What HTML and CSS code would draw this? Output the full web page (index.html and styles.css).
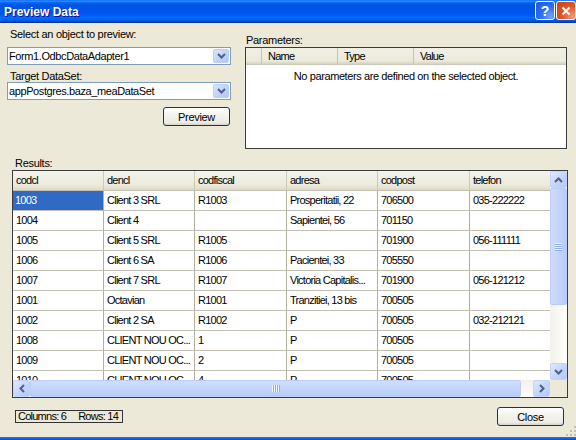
FILE: index.html
```html
<!DOCTYPE html>
<html lang="en">
<head>
    <meta charset="UTF-8">
    <title>Preview Data</title>
    <link rel="stylesheet" href="styles.css">
</head>
<body>
    <div class="window">
        <div class="titlebar">
            <span class="title">Preview Data</span>
            <div class="captionBtns">
                <span class="cbtn help">?</span>
                <span class="cbtn close">
                    <svg width="10" height="10" viewBox="0 0 10 10"><path d="M1.5 1.5 L8.5 8.5 M8.5 1.5 L1.5 8.5" stroke="#fff" stroke-width="2" fill="none"/></svg>
                </span>
            </div>
        </div>

        <div class="content">
            <div class="top">
                <div class="selectCol">
                    <div class="lbl">Select an object to preview:</div>
                    <div class="combo first">
                        <span class="comboText">Form1.OdbcDataAdapter1</span>
                        <span class="comboBtn"><svg width="9" height="6" viewBox="0 0 9 6"><path d="M1 1 L4.5 4.5 L8 1" fill="none" stroke="#4D6185" stroke-width="2"/></svg></span>
                    </div>
                    <div class="lbl second">Target DataSet:</div>
                    <div class="combo">
                        <span class="comboText">appPostgres.baza_meaDataSet</span>
                        <span class="comboBtn"><svg width="9" height="6" viewBox="0 0 9 6"><path d="M1 1 L4.5 4.5 L8 1" fill="none" stroke="#4D6185" stroke-width="2"/></svg></span>
                    </div>
                    <button class="xpBtn previewBtn">Preview</button>
                </div>

                <div class="params">
                    <div class="lbl paramsLbl">Parameters:</div>
                    <div class="listview">
                        <div class="lvHead">
                            <span class="lvCol c0"></span>
                            <span class="lvCol c1">Name</span>
                            <span class="lvCol c2">Type</span>
                            <span class="lvCol c3">Value</span>
                        </div>
                        <div class="lvEmpty">No parameters are defined on the selected object.</div>
                    </div>
                </div>
            </div>

            <div class="lbl resultsLbl">Results:</div>

            <div class="grid">
                <div class="gridView">
                    <div class="gRow gHead">
                        <span class="gCell">codcl</span>
                        <span class="gCell">dencl</span>
                        <span class="gCell">codfiscal</span>
                        <span class="gCell">adresa</span>
                        <span class="gCell">codpost</span>
                        <span class="gCell">telefon</span>
                    </div>
                    <div class="gRow">
                        <span class="gCell sel">1003</span>
                        <span class="gCell">Client 3 SRL</span>
                        <span class="gCell">R1003</span>
                        <span class="gCell">Prosperitatii, 22</span>
                        <span class="gCell">706500</span>
                        <span class="gCell">035-222222</span>
                    </div>
                    <div class="gRow">
                        <span class="gCell">1004</span>
                        <span class="gCell">Client 4</span>
                        <span class="gCell"></span>
                        <span class="gCell">Sapientei, 56</span>
                        <span class="gCell">701150</span>
                        <span class="gCell"></span>
                    </div>
                    <div class="gRow">
                        <span class="gCell">1005</span>
                        <span class="gCell">Client 5 SRL</span>
                        <span class="gCell">R1005</span>
                        <span class="gCell"></span>
                        <span class="gCell">701900</span>
                        <span class="gCell">056-111111</span>
                    </div>
                    <div class="gRow">
                        <span class="gCell">1006</span>
                        <span class="gCell">Client 6 SA</span>
                        <span class="gCell">R1006</span>
                        <span class="gCell">Pacientei, 33</span>
                        <span class="gCell">705550</span>
                        <span class="gCell"></span>
                    </div>
                    <div class="gRow">
                        <span class="gCell">1007</span>
                        <span class="gCell">Client 7 SRL</span>
                        <span class="gCell">R1007</span>
                        <span class="gCell">Victoria Capitalis...</span>
                        <span class="gCell">701900</span>
                        <span class="gCell">056-121212</span>
                    </div>
                    <div class="gRow">
                        <span class="gCell">1001</span>
                        <span class="gCell">Octavian</span>
                        <span class="gCell">R1001</span>
                        <span class="gCell">Tranzitiei, 13 bis</span>
                        <span class="gCell">700505</span>
                        <span class="gCell"></span>
                    </div>
                    <div class="gRow">
                        <span class="gCell">1002</span>
                        <span class="gCell">Client 2 SA</span>
                        <span class="gCell">R1002</span>
                        <span class="gCell">P</span>
                        <span class="gCell">700505</span>
                        <span class="gCell">032-212121</span>
                    </div>
                    <div class="gRow">
                        <span class="gCell">1008</span>
                        <span class="gCell">CLIENT NOU OC...</span>
                        <span class="gCell">1</span>
                        <span class="gCell">P</span>
                        <span class="gCell">700505</span>
                        <span class="gCell"></span>
                    </div>
                    <div class="gRow">
                        <span class="gCell">1009</span>
                        <span class="gCell">CLIENT NOU OC...</span>
                        <span class="gCell">2</span>
                        <span class="gCell">P</span>
                        <span class="gCell">700505</span>
                        <span class="gCell"></span>
                    </div>
                    <div class="gRow">
                        <span class="gCell">1010</span>
                        <span class="gCell">CLIENT NOU OC...</span>
                        <span class="gCell">4</span>
                        <span class="gCell">P</span>
                        <span class="gCell">700505</span>
                        <span class="gCell"></span>
                    </div>
                </div>

                <div class="vScroll">
                    <span class="sbBtn"><svg width="9" height="6" viewBox="0 0 9 6"><path d="M1 5 L4.5 1.5 L8 5" fill="none" stroke="#4D6185" stroke-width="2"/></svg></span>
                    <span class="sbThumb vThumb"><span class="gripV"></span></span>
                    <span class="sbTrack"></span>
                    <span class="sbBtn"><svg width="9" height="6" viewBox="0 0 9 6"><path d="M1 1 L4.5 4.5 L8 1" fill="none" stroke="#4D6185" stroke-width="2"/></svg></span>
                </div>
                <div class="hScroll">
                    <span class="sbBtn"><svg width="6" height="9" viewBox="0 0 6 9"><path d="M5 1 L1.5 4.5 L5 8" fill="none" stroke="#4D6185" stroke-width="2"/></svg></span>
                    <span class="sbThumb hThumb"><span class="gripH"></span></span>
                    <span class="sbTrack"></span>
                    <span class="sbBtn"><svg width="6" height="9" viewBox="0 0 6 9"><path d="M1 1 L4.5 4.5 L1 8" fill="none" stroke="#4D6185" stroke-width="2"/></svg></span>
                </div>
                <div class="corner"></div>
            </div>

            <div class="footer">
                <div class="status"><span>Columns: 6</span><span>Rows: 14</span></div>
                <button class="xpBtn closeBtn">Close</button>
            </div>
        </div>

        <div class="frameBottom"></div>

        <!-- size grip -->
        <svg class="sizeGrip" width="11" height="11" viewBox="0 0 11 11">
            <rect x="9" y="1" width="2" height="2" fill="#c4c0b0"/>
            <rect x="5" y="5" width="2" height="2" fill="#c4c0b0"/>
            <rect x="9" y="5" width="2" height="2" fill="#c4c0b0"/>
            <rect x="1" y="9" width="2" height="2" fill="#c4c0b0"/>
            <rect x="5" y="9" width="2" height="2" fill="#c4c0b0"/>
            <rect x="9" y="9" width="2" height="2" fill="#c4c0b0"/>
        </svg>
    </div>
</body>
</html>
```

FILE: styles.css
```css
html, body {
    margin: 0;
    padding: 0;
}
body {
    width: 576px;
    height: 440px;
    overflow: hidden;
    background: #ECE9D8;
    font-family: "Liberation Sans", Arial, sans-serif;
    font-size: 11px;
    color: #000;
}
.window {
    position: relative;
    width: 576px;
    height: 440px;
    display: flex;
    flex-direction: column;
    background: #ECE9D8;
}

/* title bar */
.titlebar {
    flex: none;
    height: 23px;
    display: flex;
    justify-content: space-between;
    background: linear-gradient(to bottom, #0058ee 0%, #3593ff 4%, #288eff 6%, #127dff 8%, #036ffc 10%, #0262ee 14%, #0057e5 20%, #0054e3 24%, #0055eb 56%, #005bf5 66%, #026afe 76%, #0062ef 86%, #0052d6 92%, #0040ab 96%, #003092 100%);
}
.title {
    padding: 5px 0 0 4px;
    font-size: 12px;
    font-weight: bold;
    color: #fff;
    text-shadow: 1px 1px #0f1089;
}
.captionBtns {
    display: flex;
    gap: 1px;
    padding-top: 1px;
}
.cbtn {
    width: 20px;
    height: 19px;
    box-sizing: border-box;
    border: 1px solid #fff;
    border-radius: 3px;
    display: flex;
    align-items: center;
    justify-content: center;
    color: #fff;
    font-weight: bold;
    font-size: 14px;
}
.cbtn.help {
    background: radial-gradient(circle at 80% 85%, #6fa4ff 0, #2d6ff0 45%, #1c55dc 100%);
}
.cbtn.close {
    background: radial-gradient(circle at 85% 85%, #f39a78 0, #e0582c 45%, #c93f14 100%);
}

/* dialog content */
.content {
    flex: 1;
    display: flex;
    flex-direction: column;
    padding: 5px 9px 0 7px;
}
.lbl {
    height: 12px;
    line-height: 12px;
    padding-left: 3px;
    letter-spacing: -0.3px;
    white-space: nowrap;
}
.top {
    display: flex;
}
.selectCol {
    width: 224px;
    display: flex;
    flex-direction: column;
}
.combo {
    height: 18px;
    box-sizing: border-box;
    border: 1px solid #7f9db9;
    background: #fff;
    display: flex;
    align-items: center;
    justify-content: space-between;
}
.combo.first {
    margin-top: 7px;
}
.lbl.second {
    margin-top: 5px;
}
.comboText {
    padding-left: 1px;
    letter-spacing: -0.4px;
    white-space: nowrap;
}
.comboBtn {
    width: 16px;
    height: 14px;
    margin-right: 1px;
    box-sizing: border-box;
    border: 1px solid #bcd0f6;
    border-radius: 2px;
    background: linear-gradient(135deg, #dce6fd, #c1d3fb 50%, #b2c7f8);
    display: flex;
    align-items: center;
    justify-content: center;
}
.xpBtn {
    width: 67px;
    height: 19px;
    padding: 0;
    box-sizing: border-box;
    border: 1px solid #003c74;
    border-radius: 3px;
    background: linear-gradient(to bottom, #fff 0%, #f4f3ee 40%, #ecebe6 85%, #d6d0c5 100%);
    font-family: "Liberation Sans", Arial, sans-serif;
    font-size: 11px;
    letter-spacing: -0.3px;
    color: #000;
}
.previewBtn {
    align-self: flex-end;
    margin: 7px 1px 0 0;
}

/* narrow text used by the grid, list headers and status label */
.lvCol, .gridView, .status {
    font-size: 11px;
    letter-spacing: -0.75px;
}

/* parameters */
.params {
    flex: 1;
    margin-left: 14px;
}
.paramsLbl {
    margin-top: 6px;
    padding-left: 1px;
}
.listview {
    margin-top: 1px;
    height: 102px;
    box-sizing: border-box;
    border: 1px solid #3c3c3c;
    background: #fff;
}
.lvHead {
    display: flex;
    height: 17px;
    box-sizing: border-box;
    background: linear-gradient(to bottom, #f1efe6, #ebeadb 80%, #d6d2c2);
    border-bottom: 1px solid #cbc7b8;
}
.lvCol {
    box-sizing: border-box;
    height: 16px;
    line-height: 16px;
    padding-left: 6px;
    border-right: 1px solid #c7c5b2;
}
.lvCol.c0 {
    width: 16px;
    padding: 0;
}
.lvCol.c1, .lvCol.c2 {
    width: 76px;
}
.lvCol.c3 {
    flex: 1;
    border-right: 0;
}
.lvEmpty {
    margin-top: 5px;
    line-height: 13px;
    text-align: center;
    letter-spacing: -0.4px;
}

/* results grid */
.resultsLbl {
    margin-top: 8px;
    padding-left: 8px;
}
.grid {
    margin: 1px -1px 0 5px;
    height: 228px;
    box-sizing: border-box;
    border: 1px solid #3c3c3c;
    background: #fff;
    display: grid;
    grid-template-columns: 1fr 17px;
    grid-template-rows: 1fr 17px;
}
.gridView {
    overflow: hidden;
}
.gRow {
    display: grid;
    grid-template-columns: 91px 91px 92px 91px 92px 91px;
}
.gCell {
    height: 20px;
    box-sizing: border-box;
    padding-left: 3px;
    line-height: 19px;
    border-right: 1px solid #b2afa2;
    border-bottom: 1px solid #c3c0b3;
    white-space: nowrap;
    overflow: hidden;
}
.gCell.sel {
    padding-left: 2px;
    background: #316ac5;
    color: #fff;
}
.gHead .gCell {
    background: linear-gradient(to bottom, #f4f3ec, #ebeadb 75%, #dedacb);
    border-right: 1px solid #cdcab9;
    border-bottom: 1px solid #c2beae;
}

/* scrollbars */
.vScroll, .hScroll {
    display: flex;
    background: linear-gradient(to right, #f3f1ec, #fefefb);
}
.vScroll {
    flex-direction: column;
}
.hScroll {
    background: linear-gradient(to bottom, #f3f1ec, #fefefb);
}
.sbBtn {
    flex: none;
    width: 17px;
    height: 17px;
    box-sizing: border-box;
    border: 1px solid #c3d3fd;
    border-radius: 2px;
    background: linear-gradient(135deg, #e1eafe, #c6d6fc 50%, #b4c9f8);
    display: flex;
    align-items: center;
    justify-content: center;
}
.sbThumb {
    flex: none;
    box-sizing: border-box;
    border: 1px solid #b9cdf7;
    border-radius: 2px;
    display: flex;
    align-items: center;
    justify-content: center;
}
.vThumb {
    height: 117px;
    background: linear-gradient(to right, #d0defd, #c3d5fd 50%, #b6cbfa);
}
.hThumb {
    width: 491px;
    background: linear-gradient(to bottom, #d0defd, #c3d5fd 50%, #b6cbfa);
}
.sbTrack {
    flex: 1;
}
.gripV {
    width: 7px;
    height: 8px;
    background: repeating-linear-gradient(to bottom, #eef4fe 0, #eef4fe 1px, #8cb0f8 1px, #8cb0f8 2px);
}
.gripH {
    width: 8px;
    height: 7px;
    background: repeating-linear-gradient(to right, #eef4fe 0, #eef4fe 1px, #8cb0f8 1px, #8cb0f8 2px);
}
.corner {
    background: #ece9d8;
}

/* footer */
.footer {
    margin-top: 9px;
    height: 19px;
    padding: 0 3px 0 8px;
    display: flex;
    align-items: center;
    justify-content: space-between;
}
.status {
    height: 13px;
    box-sizing: border-box;
    border: 1px solid #333;
    padding: 0 4px 0 2px;
    line-height: 11px;
    display: flex;
    gap: 12px;
}
.frameBottom {
    flex: none;
    height: 3px;
    margin-top: auto;
    background: linear-gradient(to bottom, #2c6ef2, #0a4ad8);
}
.sizeGrip {
    position: absolute;
    right: 0;
    bottom: 4px;
}
```
